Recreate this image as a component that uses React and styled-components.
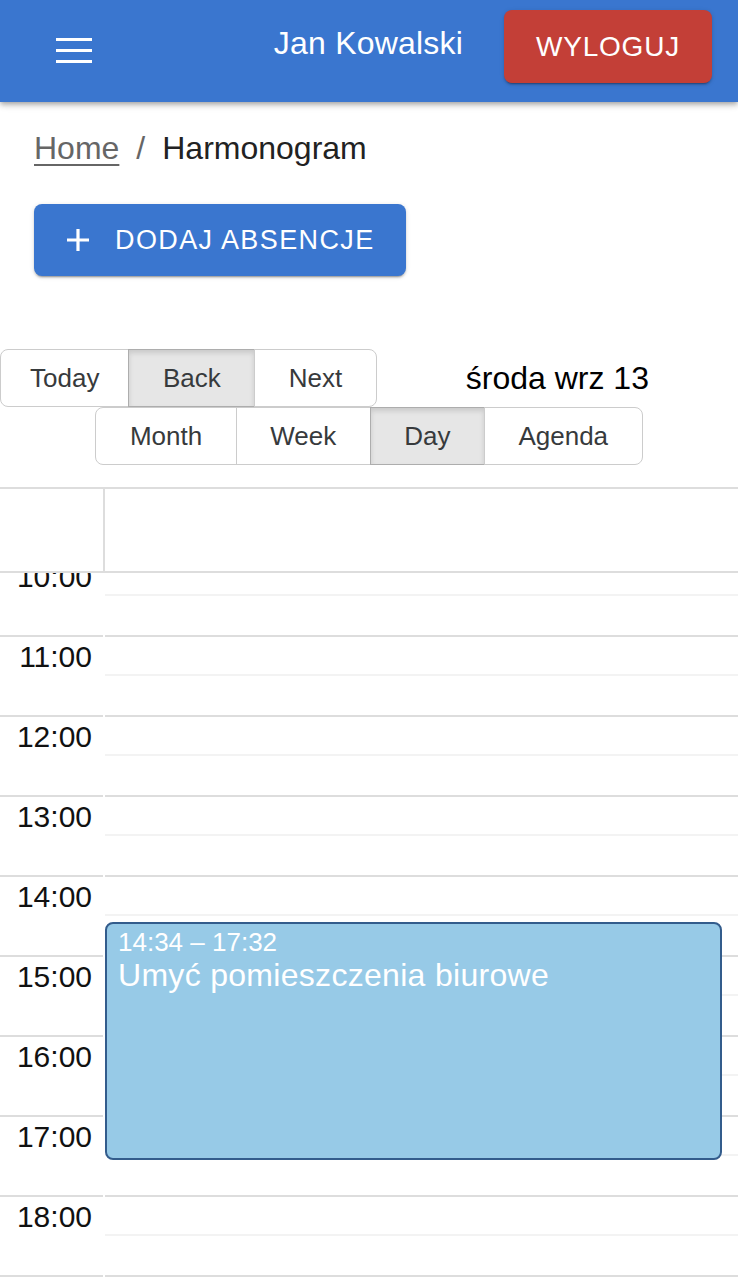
import { useLayoutEffect, useRef } from 'react';
import styled, { createGlobalStyle } from 'styled-components';

const HOUR_HEIGHT = 80;

const GlobalStyle = createGlobalStyle`
    body {
        margin: 0;
        background-color: #ffffff;
        font-family: 'Liberation Sans', Arial, sans-serif;
        overflow: hidden;
    }

    * {
        box-sizing: border-box;
    }
`;

const AppBar = styled.header`
    height: 102px;
    display: flex;
    align-items: center;
    padding: 0 26px 0 56px;
    background-color: #3a76cf;
    box-shadow: 0 2px 4px -1px rgba(0, 0, 0, 0.2), 0 4px 5px 0 rgba(0, 0, 0, 0.14), 0 1px 10px 0 rgba(0, 0, 0, 0.12);
    position: relative;
    z-index: 2;
`;

const MenuButton = styled.button`
    display: flex;
    padding: 0;
    border: none;
    background: none;
    cursor: pointer;
`;

const UserName = styled.span`
    margin-left: auto;
    margin-right: 41px;
    color: #ffffff;
    font-size: 32px;
    letter-spacing: 0.2px;
    margin-top: -16px;
`;

const LogoutButton = styled.button`
    align-self: flex-start;
    margin-top: 10px;
    width: 208px;
    height: 73px;
    border: none;
    border-radius: 8px;
    background-color: #c33f37;
    color: #ffffff;
    font-family: inherit;
    font-size: 28px;
    letter-spacing: 0.8px;
    box-shadow: 0 3px 1px -2px rgba(0, 0, 0, 0.2), 0 2px 2px 0 rgba(0, 0, 0, 0.14), 0 1px 5px 0 rgba(0, 0, 0, 0.12);
    cursor: pointer;
`;

const Main = styled.main`
    padding: 0 34px;
`;

const Breadcrumbs = styled.nav`
    display: flex;
    align-items: center;
    margin-top: 26px;
    height: 40px;
    font-size: 32px;
`;

const Crumb = styled.a`
    color: #666666;
    text-decoration: underline;
    text-underline-offset: 5px;
    text-decoration-thickness: 2px;
`;

const Separator = styled.span`
    margin: 0 17px;
    color: #666666;
`;

const CurrentCrumb = styled.span`
    color: #222222;
`;

const AddButton = styled.button`
    display: flex;
    align-items: center;
    gap: 25px;
    margin-top: 36px;
    width: 372px;
    height: 72px;
    padding: 0 0 0 32px;
    border: none;
    border-radius: 8px;
    background-color: #3a76cf;
    color: #ffffff;
    font-family: inherit;
    font-size: 27px;
    letter-spacing: 1.4px;
    box-shadow: 0 3px 1px -2px rgba(0, 0, 0, 0.2), 0 2px 2px 0 rgba(0, 0, 0, 0.14), 0 1px 5px 0 rgba(0, 0, 0, 0.12);
    cursor: pointer;
`;

const Calendar = styled.section`
    margin-top: 73px;
`;

const Toolbar = styled.div`
    display: flex;
    flex-wrap: wrap;
    justify-content: center;
    align-items: center;
    margin-bottom: 22px;
`;

const ButtonGroup = styled.div`
    display: inline-flex;
`;

const ToolButton = styled.button`
    height: 58px;
    padding: 0 ${(p) => p.$pad || 33.5}px;
    margin-left: -1px;
    border: 1px solid ${(p) => (p.$active ? '#adadad' : '#cccccc')};
    background-color: ${(p) => (p.$active ? '#e6e6e6' : '#ffffff')};
    box-shadow: ${(p) => (p.$active ? 'inset 0 3px 5px rgba(0, 0, 0, 0.125)' : 'none')};
    color: #373a3c;
    font-family: inherit;
    font-size: 26px;
    cursor: pointer;

    &:first-child {
        margin-left: 0;
        border-radius: 8px 0 0 8px;
    }

    &:last-child {
        border-radius: 0 8px 8px 0;
    }
`;

const ToolbarLabel = styled.span`
    flex: 1;
    padding: 0 20px;
    text-align: center;
    font-size: 32px;
    color: #000000;
`;

const TimeView = styled.div`
    border-top: 2px solid #dddddd;
`;

const TimeHeader = styled.div`
    display: flex;
    height: 84px;
    border-bottom: 2px solid #dddddd;
`;

const GutterCell = styled.div`
    width: 105px;
    flex-shrink: 0;
    border-right: 2px solid #dddddd;
`;

const TimeBody = styled.div`
    display: flex;
    height: 710px;
    overflow: hidden;
`;

const Gutter = styled.div`
    width: 105px;
    flex-shrink: 0;
    border-right: 2px solid #dddddd;
`;

const DayColumn = styled.div`
    flex: 1;
    position: relative;
`;

const SlotGroup = styled.div`
    height: ${HOUR_HEIGHT}px;
    border-bottom: 2px solid #dddddd;
`;

const HalfSlot = styled.div`
    height: 39px;
    border-bottom: 2px solid #f3f3f3;
`;

const TimeLabel = styled.div`
    height: 40px;
    line-height: 40px;
    padding-right: 11px;
    text-align: right;
    font-size: 30px;
    color: #111111;
`;

const Event = styled.div`
    position: absolute;
    left: 0;
    right: 16px;
    padding: 3px 11px;
    border: 2px solid #335c8c;
    border-radius: 8px;
    background-color: #97cae7;
    color: #ffffff;
    overflow: hidden;
`;

const EventTime = styled.div`
    font-size: 26px;
    line-height: 30px;
`;

const EventTitle = styled.div`
    font-size: 32px;
    line-height: 36px;
    letter-spacing: 0.3px;
`;

const hours = Array.from({ length: 24 }, (_, i) => `${i}:00`.padStart(5, '0'));

const events = [{ start: [14, 34], end: [17, 32], title: 'Umyć pomieszczenia biurowe' }];

const toPx = ([h, m]) => (h + m / 60) * HOUR_HEIGHT;

const formatTime = (t) => t.map((v) => String(v).padStart(2, '0')).join(':');

function App() {
    const bodyRef = useRef(null);

    /* scroll to the working hours */
    useLayoutEffect(() => {
        if (bodyRef.current) bodyRef.current.scrollTop = 10 * HOUR_HEIGHT + 16;
    }, []);

    return (
        <>
            <GlobalStyle />
            <AppBar>
                <MenuButton type="button" aria-label="menu">
                    <svg width="36" height="26" viewBox="0 0 36 26">
                        <rect x="0" y="0" width="36" height="3" fill="#ffffff" />
                        <rect x="0" y="11" width="36" height="3" fill="#ffffff" />
                        <rect x="0" y="22" width="36" height="3" fill="#ffffff" />
                    </svg>
                </MenuButton>
                <UserName>Jan Kowalski</UserName>
                <LogoutButton type="button">WYLOGUJ</LogoutButton>
            </AppBar>

            <Main>
                <Breadcrumbs>
                    <Crumb>Home</Crumb>
                    <Separator>/</Separator>
                    <CurrentCrumb>Harmonogram</CurrentCrumb>
                </Breadcrumbs>

                <AddButton type="button">
                    <svg width="24" height="24" viewBox="0 0 24 24">
                        <path d="M12 1v22M1 12h22" stroke="#ffffff" strokeWidth="3.2" />
                    </svg>
                    DODAJ ABSENCJE
                </AddButton>
            </Main>

            <Calendar>
                <Toolbar>
                    <ButtonGroup>
                        <ToolButton type="button" $pad={29}>Today</ToolButton>
                        <ToolButton type="button" $active>Back</ToolButton>
                        <ToolButton type="button">Next</ToolButton>
                    </ButtonGroup>
                    <ToolbarLabel>środa wrz 13</ToolbarLabel>
                    <ButtonGroup>
                        <ToolButton type="button">Month</ToolButton>
                        <ToolButton type="button">Week</ToolButton>
                        <ToolButton type="button" $active>Day</ToolButton>
                        <ToolButton type="button">Agenda</ToolButton>
                    </ButtonGroup>
                </Toolbar>

                <TimeView>
                    <TimeHeader>
                        <GutterCell />
                    </TimeHeader>
                    <TimeBody ref={bodyRef}>
                        <Gutter>
                            {hours.map((hour) => (
                                <SlotGroup key={hour}>
                                    <TimeLabel>{hour}</TimeLabel>
                                </SlotGroup>
                            ))}
                        </Gutter>
                        <DayColumn>
                            {hours.map((hour) => (
                                <SlotGroup key={hour}>
                                    <HalfSlot />
                                </SlotGroup>
                            ))}
                            {events.map((event, index) => (
                                <Event
                                    key={index}
                                    style={{ top: toPx(event.start), height: toPx(event.end) - toPx(event.start) }}
                                >
                                    <EventTime>
                                        {formatTime(event.start)} – {formatTime(event.end)}
                                    </EventTime>
                                    <EventTitle>{event.title}</EventTitle>
                                </Event>
                            ))}
                        </DayColumn>
                    </TimeBody>
                </TimeView>
            </Calendar>
        </>
    );
}

export default App;
